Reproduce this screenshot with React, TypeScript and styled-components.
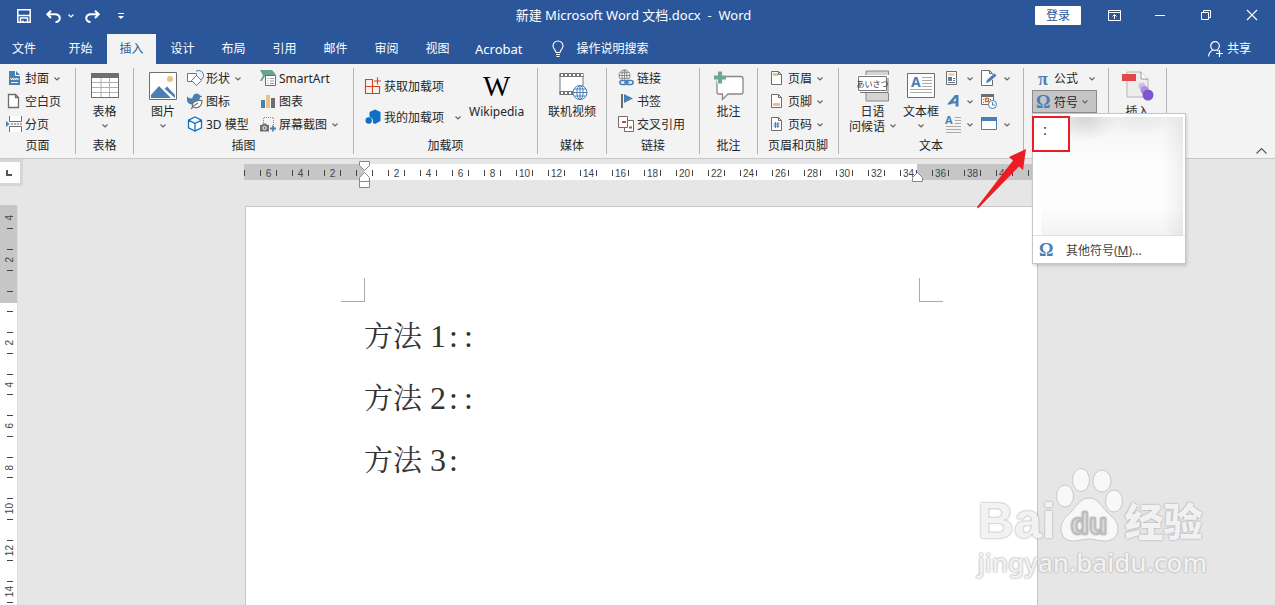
import React from "react";
import styled, { createGlobalStyle } from "styled-components";

const ui = `"Noto Sans", "Noto Sans CJK SC", sans-serif`;

const GlobalStyle = createGlobalStyle`
  *, *::before, *::after { box-sizing: border-box; }
  body { margin: 0; background: #e6e6e6; font-family: ${ui}; font-size: 12px; color: #262626; }
  button { margin: 0; padding: 0; border: 0; background: none; font: inherit; color: inherit; }
  svg { display: block; flex: none; overflow: visible; }
  p { margin: 0; }
`;

const Window = styled.div`
  position: relative;
  display: flex;
  flex-direction: column;
  height: 100vh;
  overflow: hidden;
`;

/* ---------- title bar ---------- */
const TitleBar = styled.header`
  display: flex;
  height: 34px;
  background: #2b579a;
  color: #fff;
`;
const TitleSide = styled.div<{ $end?: boolean }>`
  display: flex;
  flex: 1 1 0;
  justify-content: ${(p) => (p.$end ? "flex-end" : "flex-start")};
`;
const QuickAccess = styled.div`
  display: flex;
  align-items: center;
  height: 32px;
  padding-left: 17px;
`;
const QuickButton = styled.button<{ $gap?: number }>`
  display: flex;
  margin-right: ${(p) => p.$gap ?? 0}px;
`;
const DocTitle = styled.h1`
  margin: 0;
  padding-right: 8px;
  font-size: 13px;
  font-weight: 400;
  line-height: 30px;
  white-space: pre;
`;
const SignIn = styled.button`
  width: 46px;
  height: 19px;
  margin: 6px 10px 0 0;
  border-radius: 1px;
  background: #fff;
  color: #2b579a;
  line-height: 19px;
`;
const WindowButton = styled.button`
  display: flex;
  align-items: center;
  justify-content: center;
  width: 46px;
  height: 30px;
`;

/* ---------- tabs ---------- */
const TabBar = styled.nav`
  display: flex;
  height: 30px;
  padding-right: 24px;
  background: #2b579a;
  color: #fff;
  line-height: 28px;
`;
const FileTab = styled.button`
  width: 48px;
  margin-right: 8px;
`;
const Tab = styled.button<{ $active?: boolean; $latin?: boolean }>`
  min-width: 49px;
  margin-right: 2px;
  padding: 0 11px;
  background: ${(p) => (p.$active ? "#f3f3f3" : "transparent")};
  color: ${(p) => (p.$active ? "#2b579a" : "#fff")};
  font-size: ${(p) => (p.$latin ? 13 : 12)}px;
  white-space: nowrap;
`;
const TellMe = styled.button`
  display: flex;
  align-items: center;
  gap: 13px;
  margin-left: 16px;
`;
const Share = styled.button`
  display: flex;
  align-items: center;
  gap: 4px;
  margin-left: auto;
`;

/* ---------- ribbon ---------- */
const Ribbon = styled.div`
  position: relative;
  z-index: 2;
  display: flex;
  flex: none;
  height: 95px;
  padding: 4px 0 4px;
  border-bottom: 1px solid #c9c9c9;
  background: #f3f3f3;
`;
const Group = styled.section<{ $width: number }>`
  display: flex;
  flex: none;
  flex-direction: column;
  width: ${(p) => p.$width}px;
  height: 86px;
  border-right: 1px solid #b4b4b4;
`;
const GroupBody = styled.div<{ $pad?: number; $gap?: number; $center?: boolean }>`
  display: flex;
  align-items: flex-start;
  justify-content: ${(p) => (p.$center ? "center" : "flex-start")};
  gap: ${(p) => p.$gap ?? 0}px;
  height: 72px;
  padding-left: ${(p) => p.$pad ?? 0}px;
`;
const GroupName = styled.h2`
  margin: 0;
  font-size: 12px;
  font-weight: 400;
  line-height: 16px;
  text-align: center;
`;
const Column = styled.div<{ $width?: number; $gap?: number; $top?: number }>`
  display: flex;
  flex: none;
  flex-direction: column;
  align-items: flex-start;
  gap: ${(p) => p.$gap ?? 3}px;
  width: ${(p) => (p.$width ? `${p.$width}px` : "auto")};
  padding-top: ${(p) => p.$top ?? 0}px;
`;
const SmallButton = styled.button<{ $arrowGap?: number; $gap?: number }>`
  display: flex;
  align-items: center;
  gap: ${(p) => p.$gap ?? 3}px;
  height: 20px;
  padding-top: 2px;
  line-height: 18px;
  white-space: nowrap;

  & > svg:first-child { margin-bottom: 2px; }
  & > svg:last-child:not(:first-child) {
    margin-left: ${(p) => p.$arrowGap ?? 2}px;
  }
`;
const LargeButton = styled.button<{ $width?: number }>`
  display: flex;
  flex: none;
  flex-direction: column;
  align-items: center;
  width: ${(p) => (p.$width ? `${p.$width}px` : "auto")};
  padding-top: 2px;
  line-height: 15px;
  white-space: nowrap;
`;
const LargeIcon = styled.span`
  display: flex;
  align-items: center;
  height: 32px;
  margin-bottom: 2px;
`;
const ArrowLine = styled.span`
  display: flex;
  align-items: center;
  gap: 5px;
  height: 14px;
`;
const WikiMark = styled.span`
  font-family: "Liberation Serif", serif;
  font-size: 29px;
  line-height: 32px;
  color: #000;
`;
const SymbolAnchor = styled.div`
  position: relative;
`;
const SymbolButton = styled.button`
  display: flex;
  align-items: center;
  gap: 4px;
  width: 65px;
  height: 23px;
  padding-left: 3px;
  border: 1px solid #8c8c8c;
  background: #c5c5c5;
`;
const Equation = styled(SmallButton)`
  padding-left: 4px;
`;
const CollapseButton = styled.button`
  display: flex;
  align-self: flex-end;
  margin: 0 8px 0 auto;
`;

/* ---------- symbol menu ---------- */
const Menu = styled.div`
  position: absolute;
  top: 23px;
  left: 0;
  width: 154px;
  border: 1px solid #c6c6c6;
  background: #fff;
  box-shadow: 1px 2px 3px rgba(0, 0, 0, 0.15);
`;
const SymbolGrid = styled.div`
  display: flex;
  height: 122px;
  padding: 3px 2px 0 8px;
  border-bottom: 1px solid #e1e1e1;
`;
const SymbolArea = styled.div`
  flex: 1;
  background:
    radial-gradient(ellipse 34px 24px at 44px 0, rgba(0, 0, 0, 0.13), transparent),
    radial-gradient(ellipse 40px 20px at 100px 0, rgba(0, 0, 0, 0.05), transparent),
    linear-gradient(90deg, transparent 86%, rgba(0, 0, 0, 0.06)),
    linear-gradient(180deg, rgba(0, 0, 0, 0.04), transparent 40%, transparent 75%, rgba(0, 0, 0, 0.04)),
    #fdfdfd;
`;
const SymbolCell = styled.button`
  position: absolute;
  top: 2px;
  left: -1px;
  width: 38px;
  height: 36px;
  padding: 0 12px 4px 0;
  border: 2px solid #ed1c24;
  background: #fff;
  line-height: 24px;
`;
const MoreSymbols = styled.button`
  display: flex;
  align-items: center;
  gap: 13px;
  width: 100%;
  height: 27px;
  padding-left: 6px;
  color: #444;
`;
const Pointer = styled.svg`
  position: absolute;
  top: 59px;
  left: -56px;
`;

/* ---------- work area ---------- */
const RulerRow = styled.div`
  display: flex;
  flex: none;
  align-items: flex-start;
  height: 46px;
`;
const TabSelector = styled.button`
  display: flex;
  align-items: center;
  width: 23px;
  height: 27px;
  border: solid #d6d6d6;
  border-width: 3px 3px 3px 0;
  background: #fdfdfd;
  padding-left: 6px;
`;
const RulerTrack = styled.div`
  display: flex;
  flex: 1;
  justify-content: center;
  padding: 5px 16px 0 0;
`;
const RulerBox = styled.div`
  position: relative;
  flex: none;
`;
const HRuler = styled.div`
  display: flex;
  width: 794px;
  height: 16px;
  overflow: hidden;
  background: linear-gradient(90deg, #c6c6c6 120px, #fff 120px, #fff 673px, #c6c6c6 673px);
`;
const HCell = styled.div`
  display: flex;
  flex: none;
  align-items: center;
  justify-content: space-between;
  width: 32px;
  padding: 2px 7px 0 8px;
  font-family: "Liberation Sans", sans-serif;
  font-size: 10px;
  color: #444;

  &::before, &::after { content: ""; width: 1px; height: 6px; background: #444; }
  &:first-child { margin-left: -24px; }
`;
const Marker = styled.svg<{ $left: number; $top: number }>`
  position: absolute;
  left: ${(p) => p.$left}px;
  top: ${(p) => p.$top}px;
`;
const WorkRow = styled.main`
  display: flex;
  flex: 1;
  min-height: 0;
`;
const VRuler = styled.div`
  display: flex;
  flex: none;
  flex-direction: column;
  width: 18px;
  overflow: hidden;
  border-right: 1px solid #dcdcdc;
  background: linear-gradient(#c6c6c6 98px, #fff 98px);
`;
const VCell = styled.div`
  display: flex;
  flex: none;
  flex-direction: column;
  align-items: center;
  justify-content: space-between;
  height: 42px;
  padding: 10px 0 10px 3px;
  font-family: "Liberation Sans", sans-serif;
  font-size: 10px;
  color: #444;

  &::before, &::after { content: ""; width: 6px; height: 1px; background: #444; }
  &:nth-child(odd) { height: 41px; }
  &:first-child { height: 42px; margin-top: -8px; }
  &:first-child::before { visibility: hidden; }
`;
const VNumber = styled.span`
  line-height: 10px;
  writing-mode: vertical-rl;
  transform: rotate(180deg);
`;
const Canvas = styled.div`
  display: flex;
  flex: 1;
  justify-content: center;
  padding: 1px 10px 0 0;
`;
const Page = styled.article`
  flex: none;
  width: 793px;
  padding-top: 71px;
  border: 1px solid #c6c6c6;
  border-bottom: 0;
  background: #fff;
`;
const CropMarks = styled.div`
  display: flex;
  justify-content: space-between;
  padding: 0 94px 0 95px;
`;
const Crop = styled.span<{ $right?: boolean }>`
  width: 24px;
  height: 24px;
  border-bottom: 1px solid #ababab;
  ${(p) => (p.$right ? "border-left" : "border-right")}: 1px solid #ababab;
`;
const DocText = styled.div`
  padding: 4px 118px 0;
  font-family: "Liberation Serif", "Noto Serif CJK SC", "Noto Sans CJK SC", serif;
  font-size: 29px;
  font-weight: 400;
  line-height: 62px;
  color: #333;
`;
const Digit = styled.span`
  font-size: 32px;
  line-height: 30px;
`;
const Colon = styled(Digit)`
  display: inline-block;
  width: 15px;
  text-align: center;
`;

/* ---------- watermark ---------- */
const Watermark = styled.aside`
  position: absolute;
  right: 68px;
  bottom: 26px;
  z-index: 1;
  color: rgba(255, 255, 255, 0.85);
  text-shadow: 0 0 2px #aaa, 0 0 2px #bbb;
  pointer-events: none;
`;
const MarkTop = styled.div`
  display: flex;
  align-items: flex-end;
  height: 76px;
  font: 700 50px/48px "Liberation Sans", sans-serif;
`;
const Paw = styled.svg`
  margin-bottom: 4px;
`;
const MarkChinese = styled.span`
  margin: 0 0 4px 3px;
  font: 900 39px/44px "Noto Sans CJK SC", sans-serif;
`;
const MarkSite = styled.div`
  font: 500 26px/34px "Noto Sans", sans-serif;
`;

/* ---------- icons ---------- */
const BLUE = "#4a7fb5";
const GREY = "#6e6e6e";

const Arrow = ({ color = "#666" }: { color?: string }) => (
  <svg width="6" height="4" viewBox="0 0 6 4" fill="none" stroke={color} strokeWidth="1.2">
    <path d="M.5 .5 3 3 5.5 .5" />
  </svg>
);

const S = ({ w = 16, h = 16, children }: { w?: number; h?: number; children: React.ReactNode }) => (
  <svg width={w} height={h} viewBox={`0 0 ${w} ${h}`} fill="none" stroke={GREY}>
    {children}
  </svg>
);

const PageShape = () => <path d="M.5 1.500h7l3 3v10H.5zM7.500 1.500v3h3" fill="#fff" />;

const CoverIcon = () => (
  <S>
    <path d="M3 1h7l4 4v10H3z" fill={BLUE} stroke="none" />
    <path d="M9.500 1v4.500H14" stroke="#fff" />
    <path d="M4.500 8l1 2 1-2 1 2 1-2 1 2 1-2 1 2 1-2M5 12.500h7" stroke="#fff" strokeWidth=".9" />
  </S>
);
const BlankIcon = () => (
  <S><path d="M2.500 1.500h7l3 3v10h-10zM9.500 1.500v3h3" fill="#fff" strokeWidth="1.300" /></S>
);
const BreakIcon = () => (
  <S>
    <path d="M3.500 0v5.500h12V0M3.500 16v-5.500h12V16" fill="#fff" />
    <path d="M5 8h2M8 8h2M11 8h2M14 8h2" />
    <path d="M0 5l3.500 3L0 11z" fill={BLUE} stroke="none" />
  </S>
);
const TableIcon = () => (
  <S w={28} h={26}>
    <path d="M.5 .5h27v24H.5z" fill="#fff" />
    <path d="M1 9.500h26M1 14.500h26M1 19.500h26M10 5v19M18.500 5v19" stroke="#b0b0b0" />
    <path d="M0 0h28v5H0z" fill={GREY} stroke="none" />
    <path d="M.5 .5h27v24H.5z" />
  </S>
);
const PictureIcon = () => (
  <S w={28} h={28}>
    <path d="M.5 .5h27v27H.5z" fill="#fff" />
    <circle cx="21" cy="7" r="3" fill="#eac282" stroke="none" />
    <path d="M2 26v-3l8-9 12 12zM15.500 17l2.500-2.500L26 23v3z" fill={BLUE} stroke="none" />
    <path d="M16 17.500l8 8.500" stroke="#fff" />
  </S>
);
const ShapesIcon = () => (
  <S>
    <path d="M9 1.200a5 5 0 1 1 2.500 9.300" stroke={BLUE} />
    <path d="M.5 3.500h9v8h-9z" fill="#fff" stroke={BLUE} />
    <path d="M9.500 5.500l5 5-5 5-5-5z" fill="#fff" stroke={BLUE} />
  </S>
);
const IconsIcon = () => (
  <S>
    <path d="M0 3.500c1 1 3 2 5 2 1-1 1-5 4.500-5 2 0 3 1 3.500 2l2.500 1-2.500 1c-1 4-3 7-7.500 7-3 0-5-1.500-5.500-4z" fill={BLUE} stroke="none" />
    <path d="M5.500 14c-1-5 3-7 9.500-6.500 0 5-3 9-9.500 6.500zM4 16c2-3 4-4.500 7-6" fill="#fff" strokeWidth="1.200" />
  </S>
);
const CubeIcon = () => (
  <S>
    <path d="M8 1l6.500 3.200v7.600L8 15l-6.500-3.200V4.200zM1.500 4.200L8 7.500l6.500-3.300M8 7.500V15" fill="#fff" stroke="#0e72c4" strokeWidth="1.300" />
  </S>
);
const SmartArtIcon = () => (
  <S>
    <path d="M0 0h12l3.500 4v2H5l-3 5H0l3-5.500z" fill="#6aa38f" stroke="none" />
    <path d="M5.500 5.500h10v10h-10z" fill="#fff" />
    <path d="M7.500 8.500h1M10 8.500h4M7.500 11h1M10 11h4M7.500 13.500h1M10 13.500h4" stroke="#999" />
  </S>
);
const ChartIcon = () => (
  <S>
    <path d="M1 7h4v8H1z" fill={BLUE} stroke="none" />
    <path d="M6 2h4v13H6z" fill="#eac282" stroke="none" />
    <path d="M11 5h4v10h-4z" fill={GREY} stroke="none" />
  </S>
);
const ScreenshotIcon = () => (
  <S>
    <path d="M3.500 7V1.500h10V9" stroke="#888" strokeDasharray="1 1" />
    <path d="M0 9h2l1-1.500h3L7 9h2v6.500H0z" fill={GREY} stroke="none" />
    <circle cx="4.500" cy="12" r="1.700" stroke="#fff" />
    <path d="M10 12.500h6M13 9.500v6" stroke={BLUE} strokeWidth="1.800" />
  </S>
);
const StoreIcon = () => (
  <S><path d="M.5 1.500h7v14h-7zM.5 8.500h14v7H.5zM12.500-.5v7M9 3h7" stroke="#d0431c" strokeWidth="1.100" /></S>
);
const AddinIcon = () => (
  <S>
    <path d="M4.500 3L10 .5 15.500 3v9L10 15l-2.200-1.300c.8-3-.5-5.200-3.300-5.700z" fill="#0f6fc5" stroke="none" />
    <circle cx="3.700" cy="11.500" r="3.200" fill="#0f6fc5" stroke="none" />
  </S>
);
const Globe = ({ x, y, r, color }: { x: number; y: number; r: number; color: string }) => (
  <g stroke={color}>
    <circle cx={x} cy={y} r={r} fill="#fff" />
    <ellipse cx={x} cy={y} rx={r * 0.45} ry={r} />
    <path d={`M${x - r} ${y}h${2 * r}M${x} ${y - r}v${2 * r}M${x - r * 0.85} ${y - r / 2}h${r * 1.7}M${x - r * 0.85} ${y + r / 2}h${r * 1.7}`} />
  </g>
);
const VideoIcon = () => (
  <S w={28} h={28}>
    <path d="M2 2.500h23v20H2z" fill="#fff" stroke="#777" />
    <path d="M1.500 3h24M1.500 21h24" stroke="#777" strokeWidth="4" />
    <path d="M3 3h22M3 21h22" stroke="#fff" strokeWidth="2" strokeDasharray="2 2" />
    <Globe x={22} y={20.500} r={7} color={BLUE} />
  </S>
);
const LinkIcon = () => (
  <S>
    <Globe x={6.500} y={5.500} r={5.500} color="#888" />
    <path d="M1 9.500h15v6H1z" fill="#f3f3f3" stroke="none" />
    <rect x="2" y="10.500" width="7" height="4" rx="2" stroke={BLUE} strokeWidth="1.600" />
    <rect x="8" y="10.500" width="7" height="4" rx="2" stroke={BLUE} strokeWidth="1.600" />
    <path d="M6 12.500h5" stroke={BLUE} strokeWidth="1.600" />
  </S>
);
const BookmarkIcon = () => (
  <S>
    <path d="M3 1h2v14H3z" fill={GREY} stroke="none" />
    <path d="M6 1l9 4.500L6 10z" fill={BLUE} stroke="none" />
  </S>
);
const CrossRefIcon = () => (
  <S>
    <path d="M6.500 4.500h9v11h-9z" fill="#fff" />
    <path d="M.5 .5h9v11h-9z" fill="#fff" />
    <path d="M4 6h4M11 11.500h3" stroke="#d24726" strokeWidth="2" />
  </S>
);
const CommentIcon = () => (
  <S w={30} h={30}>
    <path d="M5.500 5.500q-2.500 0-2.500 2.500v13q0 2 2 2h3.500v5.500l5.500-5.500h13q2 0 2-2v-13.500q0-2-2-2z" fill="#fff" stroke="#888" strokeWidth="1.300" />
    <path d="M0 6.500h12M6 .5v12" stroke="#f3f3f3" strokeWidth="6" />
    <path d="M0 6.500h12M6 .5v12" stroke="#6fa695" strokeWidth="4" />
  </S>
);
const HeaderIcon = () => (
  <S w={14}><PageShape /><path d="M2 3h5v3H2z" fill="#eac282" stroke="none" /></S>
);
const FooterIcon = () => (
  <S w={14}><PageShape /><path d="M2 10h7v3H2z" fill="#eac282" stroke="none" /></S>
);
const PageNumIcon = () => (
  <S w={14}><PageShape /><path d="M4.500 6v6M6.800 6v6M2.500 8h6M2.500 10.200h6" stroke={BLUE} /></S>
);
const GreetingIcon = () => (
  <S w={32} h={32}>
    <path d="M9 1h22.500v30H9z" fill="#d4d4d4" stroke="#888" />
    <path d="M0 5h32v18H0z" fill="#fff" stroke="none" />
    <path d="M1.500 6.500h28v14h-28zM3 22.500h28V8" stroke="#777" fill="#fff" />
    <text x="15.500" y="17" textAnchor="middle" fontSize="8" fontFamily="Noto Sans CJK JP, sans-serif" fill="#333" stroke="none">あいさつ</text>
  </S>
);
const TextBoxIcon = () => (
  <S w={28} h={26}>
    <path d="M.5 .5h27v24H.5z" fill="#fff" />
    <text x="4" y="14" fontSize="14" fontWeight="700" fontFamily="Noto Sans, sans-serif" fill={BLUE} stroke="none">A</text>
    <path d="M15 4.500h10M15 7.500h10M15 10.500h10M15 13.500h10M3 16.500h22M3 19.500h22" stroke="#aaa" />
  </S>
);
const PartsIcon = () => (
  <S>
    <path d="M.5 1.500h10v13H.5z" fill="#fff" />
    <path d="M2.500 4.500h6" stroke="#eac282" strokeWidth="2" />
    <path d="M2 7h4v4H2z" fill={BLUE} stroke="none" />
    <path d="M7 8.500h2M7 10.500h2M2 12.500h7" />
  </S>
);
const WordArtIcon = () => (
  <S>
    <path d="M1 11.500L9 2h3.500v11.500H9.500l.2-3H6l-1.500 1zM7 8.300h2.800l.3-3.500z" fill={BLUE} stroke="none" fillRule="evenodd" />
  </S>
);
const DropCapIcon = () => (
  <S>
    <text x="-1" y="8" fontSize="11" fontWeight="700" fontFamily="Noto Sans, sans-serif" fill={BLUE} stroke="none">A</text>
    <path d="M9 1.500h6M9 4.500h6M9 7.500h6M0 10.500h15M0 13.500h15M0 16.500h15" stroke="#aaa" />
  </S>
);
const SignatureIcon = () => (
  <S>
    <path d="M.5 .5h8l3 3v12h-11zM8.500 .5v3h3" fill="#fff" />
    <path d="M4.500 13.500l1-3.500 8-7 2.500 2.500-8 7z" fill={BLUE} stroke="#fff" strokeWidth=".7" />
  </S>
);
const DateIcon = () => (
  <S>
    <path d="M.5 1.500h12v10H.5z" fill="#fff" />
    <path d="M0 1h13v3H0z" fill={GREY} stroke="none" />
    <path d="M2 6.500h2M2 9.500h2M9 6.500h2" strokeDasharray="1 1" />
    <path d="M4.500 5.500h3v3h-3z" stroke="#d9702c" strokeWidth="1.500" />
    <circle cx="11.500" cy="11.500" r="4" fill="#fff" stroke={BLUE} />
    <path d="M11.500 9v3h2.500" stroke={BLUE} />
  </S>
);
const ObjectIcon = () => (
  <S>
    <path d="M.5 1.500h15v12H.5z" fill="#fff" stroke={BLUE} />
    <path d="M0 1h16v4H0z" fill={BLUE} stroke="none" />
  </S>
);
const AcroIcon = () => (
  <S w={32} h={32}>
    <path d="M5 2h14l7 7v18H5z" fill="#ededed" stroke="#b5b5b5" />
    <path d="M19 2v7h7" fill="#fff" stroke="#999" />
    <path d="M0 4h14v7H0z" fill="#e0484c" stroke="none" />
    <circle cx="20" cy="16" r="3.500" fill="#cfc0ea" stroke="none" />
    <circle cx="22.500" cy="20" r="4" fill="#ab90de" stroke="none" />
    <circle cx="26" cy="25" r="5.500" fill="#7f56cf" stroke="none" />
  </S>
);
const GreekGlyph = styled.span`
  width: 14px;
  font-family: "Liberation Serif", serif;
  font-size: 18px;
  font-weight: 700;
  line-height: 18px;
  color: ${BLUE};
`;

const tabs = ["开始", "插入", "设计", "布局", "引用", "邮件", "审阅", "视图", "Acrobat"];
const hMarks = ["", "6", "4", "2", "", ...Array.from({ length: 20 }, (_, i) => String(2 * i + 2)), ""];
const vMarks = ["4", "2", "", "2", "4", "6", "8", "10", "12", "14"];
const lines = [
  { n: 1, colons: 2 },
  { n: 2, colons: 2 },
  { n: 3, colons: 1 },
];

export default function App() {
  return (
    <Window>
      <GlobalStyle />
      <TitleBar>
        <TitleSide>
          <QuickAccess>
            <QuickButton aria-label="保存" $gap={15}>
              <svg width="14" height="14" viewBox="0 0 14 14" fill="none" stroke="#fff" strokeWidth="1.500">
                <path d="M.8 .8h12.400v12.400H.8zM3.500 13V9h7v4M1 6.500h12M6 11.500v2" />
              </svg>
            </QuickButton>
            <QuickButton aria-label="撤消" $gap={7}>
              <svg width="15" height="13" viewBox="0 0 15 13" fill="none" stroke="#fff" strokeWidth="2">
                <path d="M5 .7L1.300 4.300 5 8M1.500 4.300h7.300c6.500 0 6.500 7.700.7 7.700" />
              </svg>
            </QuickButton>
            <QuickButton aria-label="撤消选项" $gap={11}><Arrow color="#fff" /></QuickButton>
            <QuickButton aria-label="重复" $gap={18}>
              <svg width="15" height="13" viewBox="0 0 15 13" fill="none" stroke="#fff" strokeWidth="2">
                <path d="M10 .7l3.700 3.600L10 8M13.500 4.300H6.200c-6.500 0-6.500 7.700-.7 7.700" />
              </svg>
            </QuickButton>
            <QuickButton aria-label="自定义快速访问工具栏">
              <svg width="6" height="6" viewBox="0 0 6 6" fill="#fff"><path d="M0 0h6v1H0zM0 3h6L3 6z" /></svg>
            </QuickButton>
          </QuickAccess>
        </TitleSide>
        <DocTitle>{"新建 Microsoft Word 文档.docx  -  Word"}</DocTitle>
        <TitleSide $end>
          <SignIn>登录</SignIn>
          <WindowButton aria-label="功能区显示选项">
            <svg width="13" height="11" viewBox="0 0 13 11" fill="none" stroke="#fff"><path d="M.5 .5h12v10H.5zM1 2.500h11M6.500 9V4.500M4.500 6.500l2-2 2 2" /></svg>
          </WindowButton>
          <WindowButton aria-label="最小化">
            <svg width="10" height="1" viewBox="0 0 10 1" fill="#fff"><path d="M0 0h10v1H0z" /></svg>
          </WindowButton>
          <WindowButton aria-label="还原">
            <svg width="10" height="10" viewBox="0 0 10 10" fill="none" stroke="#fff"><path d="M.5 2.500h7v7h-7zM2.500 2.500v-2h7v7h-2" /></svg>
          </WindowButton>
          <WindowButton aria-label="关闭">
            <svg width="10" height="10" viewBox="0 0 10 10" fill="none" stroke="#fff" strokeWidth="1.200"><path d="M0 0l10 10M10 0L0 10" /></svg>
          </WindowButton>
        </TitleSide>
      </TitleBar>

      <TabBar>
        <FileTab>文件</FileTab>
        {tabs.map((t) => <Tab key={t} $active={t === "插入"} $latin={t === "Acrobat"}>{t}</Tab>)}
        <TellMe>
          <svg width="12" height="16" viewBox="0 0 12 16" fill="none" stroke="#fff" strokeWidth="1.100">
            <path d="M4 11.500c0-2.500-3-3.500-3-6.500a5 5 0 0 1 10 0c0 3-3 4-3 6.500zM4 13.500h4M4.500 15.500h3" />
          </svg>
          操作说明搜索
        </TellMe>
        <Share>
          <svg width="15" height="16" viewBox="0 0 15 16" fill="none" stroke="#fff" strokeWidth="1.200">
            <circle cx="7" cy="5" r="4.300" />
            <path d="M.7 15.500c0-3 1.500-5 4-6.200M9 9.300l1.500 1M11.500 9v7M8 12.500h7" />
          </svg>
          共享
        </Share>
      </TabBar>

      <Ribbon>
        <Group $width={76}>
          <GroupBody $pad={6}>
            <Column>
              <SmallButton><CoverIcon />封面<Arrow /></SmallButton>
              <SmallButton><BlankIcon />空白页</SmallButton>
              <SmallButton><BreakIcon />分页</SmallButton>
            </Column>
          </GroupBody>
          <GroupName>页面</GroupName>
        </Group>

        <Group $width={58}>
          <GroupBody $center>
            <LargeButton><LargeIcon><TableIcon /></LargeIcon>表格<ArrowLine><Arrow /></ArrowLine></LargeButton>
          </GroupBody>
          <GroupName>表格</GroupName>
        </Group>

        <Group $width={220}>
          <GroupBody $pad={15} $gap={10}>
            <LargeButton><LargeIcon><PictureIcon /></LargeIcon>图片<ArrowLine><Arrow /></ArrowLine></LargeButton>
            <Column $width={63}>
              <SmallButton><ShapesIcon />形状<Arrow /></SmallButton>
              <SmallButton><IconsIcon />图标</SmallButton>
              <SmallButton><CubeIcon />3D 模型</SmallButton>
            </Column>
            <Column>
              <SmallButton><SmartArtIcon />SmartArt</SmallButton>
              <SmallButton><ChartIcon />图表</SmallButton>
              <SmallButton><ScreenshotIcon />屏幕截图<Arrow /></SmallButton>
            </Column>
          </GroupBody>
          <GroupName>插图</GroupName>
        </Group>

        <Group $width={184}>
          <GroupBody $pad={11} $gap={8}>
            <Column $gap={11} $top={8}>
              <SmallButton><StoreIcon />获取加载项</SmallButton>
              <SmallButton $arrowGap={8}><AddinIcon />我的加载项<Arrow /></SmallButton>
            </Column>
            <LargeButton><LargeIcon><WikiMark>W</WikiMark></LargeIcon>Wikipedia</LargeButton>
          </GroupBody>
          <GroupName>加载项</GroupName>
        </Group>

        <Group $width={69}>
          <GroupBody $center>
            <LargeButton><LargeIcon><VideoIcon /></LargeIcon>联机视频</LargeButton>
          </GroupBody>
          <GroupName>媒体</GroupName>
        </Group>

        <Group $width={93}>
          <GroupBody $pad={11}>
            <Column>
              <SmallButton><LinkIcon />链接</SmallButton>
              <SmallButton><BookmarkIcon />书签</SmallButton>
              <SmallButton><CrossRefIcon />交叉引用</SmallButton>
            </Column>
          </GroupBody>
          <GroupName>链接</GroupName>
        </Group>

        <Group $width={58}>
          <GroupBody $center>
            <LargeButton><LargeIcon><CommentIcon /></LargeIcon>批注</LargeButton>
          </GroupBody>
          <GroupName>批注</GroupName>
        </Group>

        <Group $width={81}>
          <GroupBody $pad={13}>
            <Column>
              <SmallButton><HeaderIcon />页眉<Arrow /></SmallButton>
              <SmallButton><FooterIcon />页脚<Arrow /></SmallButton>
              <SmallButton><PageNumIcon />页码<Arrow /></SmallButton>
            </Column>
          </GroupBody>
          <GroupName>页眉和页脚</GroupName>
        </Group>

        <Group $width={185}>
          <GroupBody $pad={10} $gap={7}>
            <LargeButton $width={47}>
              <LargeIcon><GreetingIcon /></LargeIcon>
              日语
              <ArrowLine>问候语<Arrow /></ArrowLine>
            </LargeButton>
            <LargeButton><LargeIcon><TextBoxIcon /></LargeIcon>文本框<ArrowLine><Arrow /></ArrowLine></LargeButton>
            <Column $width={28}>
              <SmallButton aria-label="文档部件"><PartsIcon /><Arrow /></SmallButton>
              <SmallButton aria-label="艺术字"><WordArtIcon /><Arrow /></SmallButton>
              <SmallButton aria-label="首字下沉"><DropCapIcon /><Arrow /></SmallButton>
            </Column>
            <Column>
              <SmallButton aria-label="签名行" $arrowGap={4}><SignatureIcon /><Arrow /></SmallButton>
              <SmallButton aria-label="日期和时间"><DateIcon /></SmallButton>
              <SmallButton aria-label="对象" $arrowGap={4}><ObjectIcon /><Arrow /></SmallButton>
            </Column>
          </GroupBody>
          <GroupName>文本</GroupName>
        </Group>

        <Group $width={85}>
          <GroupBody $pad={8}>
            <Column $gap={2}>
              <Equation $gap={4} $arrowGap={7}><GreekGlyph>π</GreekGlyph>公式<Arrow /></Equation>
              <SymbolAnchor>
                <SymbolButton><GreekGlyph>Ω</GreekGlyph>符号<Arrow /></SymbolButton>
                <Menu>
                  <SymbolGrid><SymbolArea /></SymbolGrid>
                  <SymbolCell>∶</SymbolCell>
                  <MoreSymbols>
                    <GreekGlyph>Ω</GreekGlyph>
                    <span>其他符号(<u>M</u>)...</span>
                  </MoreSymbols>
                </Menu>
                <Pointer width="52" height="62" viewBox="0 0 52 62" fill="#ed1c24">
                  <path d="M50 0L33 8l4 3.500L1 58l1 1.500L43 17.500l4 3.500z" />
                </Pointer>
              </SymbolAnchor>
            </Column>
          </GroupBody>
        </Group>

        <Group $width={58}>
          <GroupBody $center>
            <LargeButton><LargeIcon><AcroIcon /></LargeIcon>插入</LargeButton>
          </GroupBody>
        </Group>
        <CollapseButton aria-label="折叠功能区">
          <svg width="11" height="6" viewBox="0 0 11 6" fill="none" stroke="#555" strokeWidth="1.100"><path d="M.5 5.500l5-5 5 5" /></svg>
        </CollapseButton>
      </Ribbon>

      <RulerRow>
        <TabSelector aria-label="制表符">
          <svg width="6" height="6" viewBox="0 0 6 6" fill="#555"><path d="M0 0h2v4h4v2H0z" /></svg>
        </TabSelector>
        <RulerTrack>
          <RulerBox>
            <HRuler>{hMarks.map((m, i) => <HCell key={i}>{m}</HCell>)}</HRuler>
            <Marker $left={115} $top={-4} width="11" height="29" viewBox="0 0 11 29" fill="#fff" stroke="#888">
              <path d="M.5 1.500h10v4l-5 5-5-5zM5.500 12.500l5 5v4H.5v-4zM.5 21.500h10v6H.5z" />
            </Marker>
            <Marker $left={668} $top={8} width="11" height="11" viewBox="0 0 11 11" fill="#fff" stroke="#888">
              <path d="M5.500 .5l5 5v4H.5v-4z" />
            </Marker>
          </RulerBox>
        </RulerTrack>
      </RulerRow>

      <WorkRow>
        <VRuler>{vMarks.map((m, i) => <VCell key={i}><VNumber>{m}</VNumber></VCell>)}</VRuler>
        <Canvas>
          <Page>
            <CropMarks><Crop /><Crop $right /></CropMarks>
            <DocText>
              {lines.map((l) => (
                <p key={l.n}>
                  方法<Digit> {l.n}</Digit>
                  {Array.from({ length: l.colons }, (_, i) => <Colon key={i}>:</Colon>)}
                </p>
              ))}
            </DocText>
          </Page>
        </Canvas>
      </WorkRow>

      <Watermark>
        <MarkTop>
          <span>Bai</span>
          <Paw width="66" height="74" viewBox="0 0 66 74" fill="#f8f8f8" stroke="#c8c8c8">
            <ellipse cx="9" cy="29" rx="8.500" ry="11" />
            <ellipse cx="25" cy="13" rx="8.500" ry="11.500" />
            <ellipse cx="46" cy="14" rx="9" ry="11" />
            <ellipse cx="58" cy="34" rx="8.500" ry="11" />
            <path d="M33 31c9 0 12 8 18 14s11 9 11 17c0 8-6 12-13 12s-10-2-16-2-10 2-16 2c-7 0-12-5-12-12 0-8 5-12 10-17s9-14 18-14z" />
            <text x="33" y="67" textAnchor="middle" fontSize="30" fontWeight="700" fontFamily="Liberation Sans, sans-serif" fill="#e6e6e6" stroke="#bbb">du</text>
          </Paw>
          <MarkChinese>经验</MarkChinese>
        </MarkTop>
        <MarkSite>jingyan.baidu.com</MarkSite>
      </Watermark>
    </Window>
  );
}
